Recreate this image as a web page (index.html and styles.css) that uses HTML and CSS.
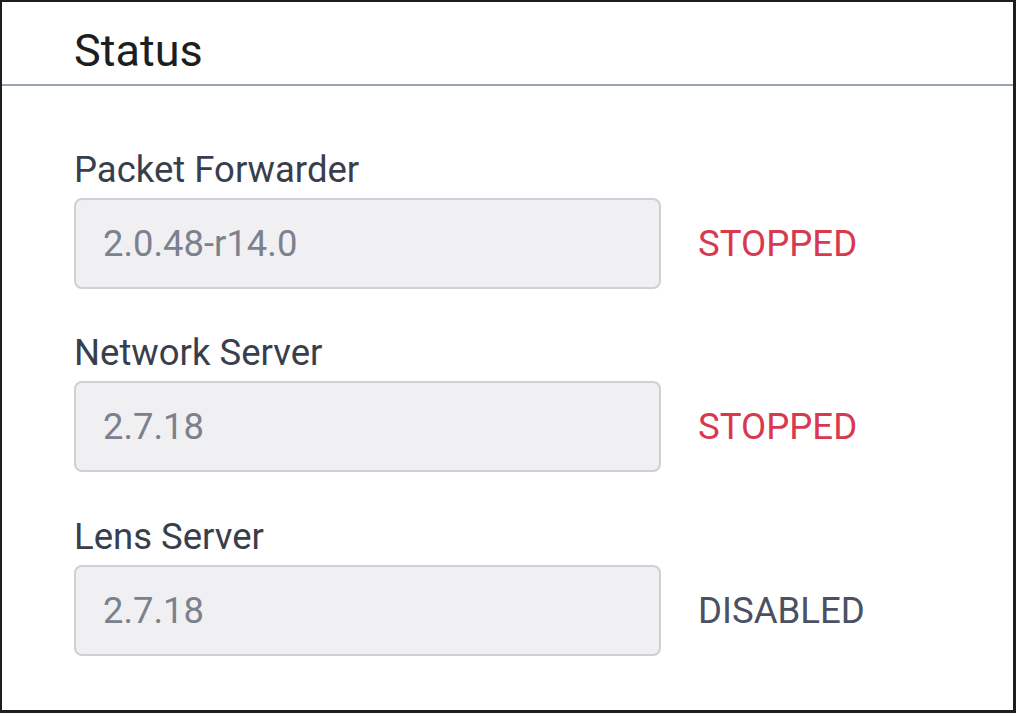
FILE: index.html
```html
<!DOCTYPE html>
<html lang="en">
<head>
<meta charset="utf-8">
<title>Status</title>
<link rel="stylesheet" href="styles.css">
</head>
<body>
<div class="frame">
  <div class="card-header">
    <h2 class="title">Status</h2>
  </div>
  <div class="card-body">
    <div class="field">
      <label class="field-label">Packet Forwarder</label>
      <div class="field-row">
        <div class="control">2.0.48-r14.0</div>
        <span class="state state-stopped">STOPPED</span>
      </div>
    </div>
    <div class="field">
      <label class="field-label">Network Server</label>
      <div class="field-row">
        <div class="control">2.7.18</div>
        <span class="state state-stopped">STOPPED</span>
      </div>
    </div>
    <div class="field">
      <label class="field-label">Lens Server</label>
      <div class="field-row">
        <div class="control">2.7.18</div>
        <span class="state state-disabled">DISABLED</span>
      </div>
    </div>
  </div>
</div>
</body>
</html>
```

FILE: styles.css
```css
* { box-sizing: border-box; }
html, body { margin: 0; padding: 0; background: #ffffff; }
body { font-family: Roboto, "Liberation Sans", Arial, sans-serif; }

.frame {
  width: 1016px;
  height: 713px;
  border-style: solid;
  border-color: #1e1e1e;
  border-width: 2px 3px 3px 2px;
  background: #ffffff;
  overflow: hidden;
}

.card-header {
  padding: 22px 0 6px 72px;
  border-bottom: 2px solid #98a4b6;
}

.title {
  margin: 0;
  font-size: 45px;
  line-height: 54px;
  font-weight: 400;
  color: #1d1e22;
}

.card-body {
  padding: 62px 0 0 72px;
}

.field { margin-bottom: 42px; }
.field:nth-child(2) { margin-bottom: 43px; }

.field-label {
  display: block;
  font-size: 36.5px;
  line-height: 44px;
  color: #393e4c;
  margin-bottom: 6px;
}

.field-row {
  display: flex;
  align-items: center;
  gap: 37px;
}

.control {
  width: 587px;
  height: 91px;
  display: flex;
  align-items: center;
  padding-left: 27px;
  background: #f0f0f3;
  border: 2px solid #cfcfd5;
  border-radius: 8px;
  font-size: 36.4px;
  color: #7c818e;
}

.state {
  font-size: 36.6px;
  line-height: 44px;
}

.state-stopped { color: #d8394f; }
.state-disabled { color: #4b5062; }
```
